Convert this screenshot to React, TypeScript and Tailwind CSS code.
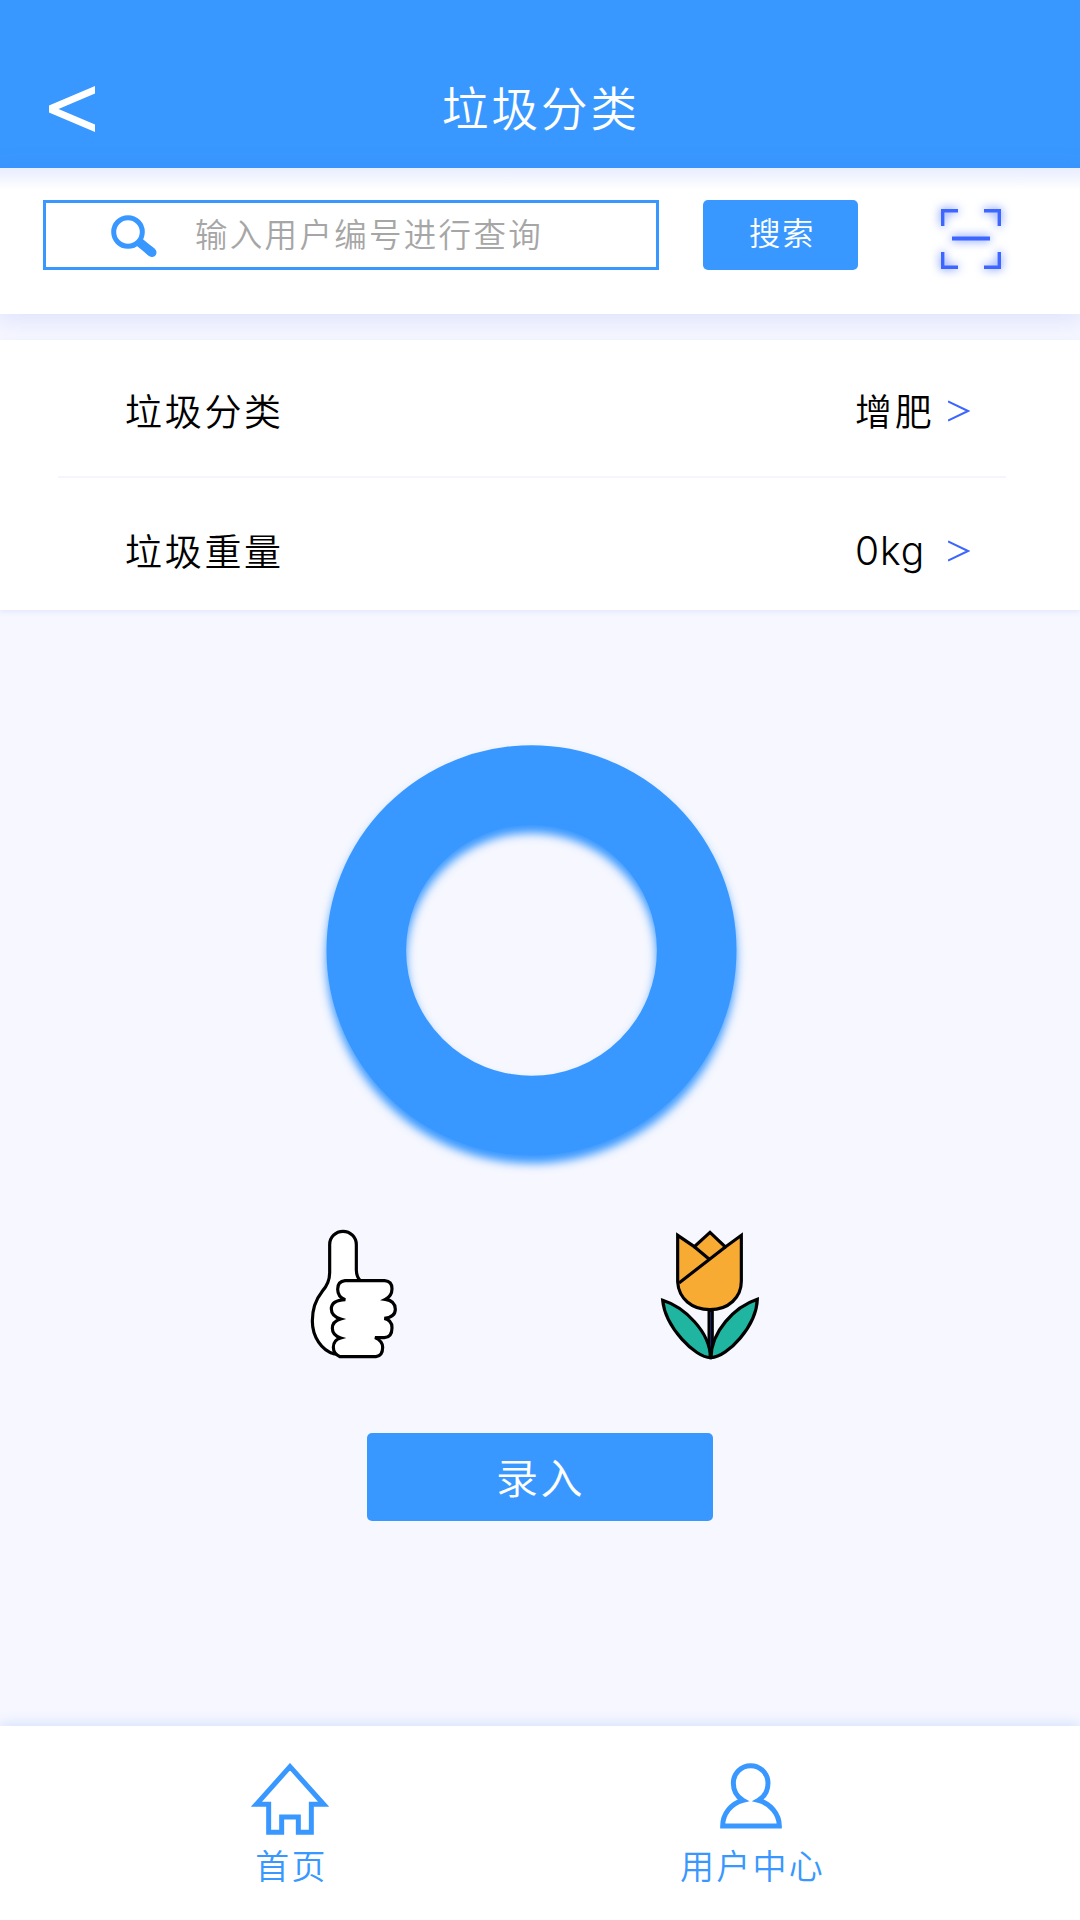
import type { ReactNode } from "react";

const FONT = 'font-["Noto_Sans_CJK_SC","Liberation_Sans",sans-serif]';

function BackIcon() {
  return (
    <svg width="46" height="48" viewBox="0 0 46 48" fill="none">
      <path d="M46 0V7.500L9.500 23L46 38.500V46L0 26.500V19.500Z" fill="#fff" />
    </svg>
  );
}

function SearchIcon() {
  return (
    <svg width="46" height="44" viewBox="0 0 46 44" fill="none" stroke="#3998ff">
      <circle cx="17" cy="17" r="14.300" strokeWidth="5" />
      <path d="M27 26L41 37.500" strokeWidth="9" />
      <path d="M38 35L41 37.500" strokeWidth="9" strokeLinecap="round" />
    </svg>
  );
}

function ScanIcon() {
  return (
    <svg
      width="60"
      height="60"
      viewBox="0 0 60 60"
      fill="none"
      stroke="#3d66ff"
      strokeWidth="3.4"
      className="overflow-visible drop-shadow-[0_0_5px_rgba(61,102,255,0.95)]"
    >
      <path d="M1.700 17V1.700H17M43 1.700H58.300V17M1.700 43V58.300H17M43 58.300H58.300V43" />
      <path d="M11 29.500H49" strokeWidth="4" />
    </svg>
  );
}

function Ring() {
  return (
    <svg width="411" height="410" viewBox="0 0 411 410" fill="none" className="overflow-visible drop-shadow-[0_8px_5px_#3998ff]">
      <circle cx="205.500" cy="205.300" r="165.200" stroke="#3998ff" strokeWidth="79.600" />
    </svg>
  );
}

function ThumbIcon() {
  return (
    <svg width="130" height="170" viewBox="0 0 390 510" fill="#fff" stroke="#000" strokeWidth="9.500" strokeLinejoin="round">
      <path d="M133 432C95 422 67 380 67 333C67 298 79 266 96 245C111 228 119 207 119 188V104A40 40 0 0 1 199 104V178C199 192 203 205 212 213L190 430Z" />
      <path
        d="M165 212H284Q306 214 306 236Q306 258 286 268Q316 272 316 298Q316 322 283 325Q306 330 306 353Q306 382 283 383H255Q278 393 278 412Q278 438 258 440H150Q130 432 130 412Q130 390 152 384Q127 376 127 355Q127 334 152 327Q124 318 124 297Q124 271 166 269Q143 262 143 238Q143 214 165 212Z"
        strokeLinejoin="miter"
      />
    </svg>
  );
}

function TulipIcon() {
  return (
    <svg width="140" height="170" viewBox="0 0 420 510" stroke="#000" strokeWidth="9.500" fill="none">
      <path d="M212 298V444" strokeWidth="19" />
      <path d="M212 306V415" stroke="#20308a" strokeWidth="2.500" />
      <path d="M68 271C132 291 211 365 211 443C166 443 76 352 68 271Z" fill="#20b5a0" />
      <path d="M352 268C283 291 213 365 213 443C264 440 349 348 352 268Z" fill="#20b5a0" />
      <path d="M113 76V216C116 265 155 299 210 299C266 299 304 262 304 214V76L256 111L210 67L163 110Z" fill="#f7ab33" />
      <path d="M163 110L208 148M256 111L117 219" />
    </svg>
  );
}

function HomeIcon() {
  return (
    <svg width="78" height="72" viewBox="0 0 234 216" fill="none" stroke="#3998ff" strokeWidth="15">
      <path d="M117 11L16 124H53V208H92V162H142V208H181V124H218Z" />
    </svg>
  );
}

function UserIcon() {
  return (
    <svg width="62" height="66" viewBox="0 0 186 198" fill="none" stroke="#3998ff" strokeWidth="15">
      <path
        d="M69 112C50 101 40 82 40 60A52 52 0 0 1 144 60C144 82 134 101 115 112C151 121 178 153 178 189H8C8 153 33 121 69 112Z"
        strokeMiterlimit="8"
      />
    </svg>
  );
}

function Chevron() {
  return (
    <svg width="22" height="22" viewBox="0 0 22 22" fill="none" stroke="#3d66ff" strokeWidth="2">
      <path d="M0 1.500L20 11L0 20.500" />
    </svg>
  );
}

function Row({ label, children }: { label: string; children: ReactNode }) {
  return (
    <div className="flex h-[57px] items-center pr-[110px] pl-[125px] text-[37px] leading-[54px] tracking-[2.700px] text-black">
      <span className="flex-1 pb-[2px]">{label}</span>
      <span className="w-[93px] pb-[2px]">{children}</span>
      <Chevron />
    </div>
  );
}

function Tab({ icon, label, className }: { icon: ReactNode; label: string; className: string }) {
  return (
    <button className={`flex flex-col items-center ${className}`}>
      <span className="flex h-[76px] items-start">{icon}</span>
      <span className="-mr-[3px] text-[34px] leading-[52px] tracking-[2.300px]">{label}</span>
    </button>
  );
}

export default function App() {
  return (
    <div className={`flex h-[1920px] w-[1080px] flex-col overflow-hidden bg-[#f6f7ff] font-[350] ${FONT}`}>
      <header className="grid h-[168px] shrink-0 grid-cols-[1fr_auto_1fr] bg-[#3998ff] pt-[70px] text-white">
        <button className="flex items-start pt-[16px] pl-[49px]">
          <BackIcon />
        </button>
        <h1 className="-mr-[2px] text-[46.500px] leading-[72px] tracking-[3px]">垃圾分类</h1>
      </header>

      <section className="relative flex h-[146px] shrink-0 items-start bg-white bg-[linear-gradient(#e9edfe,#fff_22px)] pt-8 pl-[43px] shadow-[0_4px_22px_4px_rgba(70,95,230,0.120)]">
        <div className="flex h-[70px] w-[616px] border-[3px] border-[#3998ff] bg-white">
          <span className="w-[149px] pt-[12px] pl-[65px]">
            <SearchIcon />
          </span>
          <span className="text-[32.500px] leading-[60px] tracking-[2.300px] whitespace-nowrap text-[#a6a6a6]">
            输入用户编号进行查询
          </span>
        </div>
        <button className="ml-[44px] h-[70px] w-[155px] rounded-[5px] bg-[#3998ff] pb-1.5 pl-[3px] text-[31.500px] tracking-[1.500px] text-white">
          搜索
        </button>
        <button className="ml-[83px] pt-[9px]">
          <ScanIcon />
        </button>
      </section>

      <section className="relative mt-[26px] flex h-[270px] shrink-0 flex-col bg-white pt-[42px] shadow-[0_2px_5px_rgba(90,120,240,0.120)]">
        <Row label="垃圾分类">增肥</Row>
        <div className="mt-[37px] mr-[74px] mb-[44px] ml-[58px] h-[2px] shrink-0 bg-[#f4f5fe]" />
        <Row label="垃圾重量">
          <span className="block pt-[3px] font-[Inter] text-[39px] leading-[54px] font-light tracking-[1px]">0kg</span>
        </Row>
      </section>

      <main className="flex flex-1 flex-col">
        <div className="flex pt-[135px] pl-[326px]">
          <Ring />
        </div>
        <div className="mt-[55px] flex gap-[220px] pl-[290px]">
          <ThumbIcon />
          <TulipIcon />
        </div>
        <button className="mt-[53px] ml-[367px] h-[88px] w-[346px] rounded-[5px] bg-[#3998ff] pb-[3px] pl-[1px] text-[42px] tracking-[2.500px] text-white">
          录入
        </button>
      </main>

      <footer className="flex h-[194px] shrink-0 bg-white pt-[37px] text-[#3998ff] shadow-[0_-2px_12px_rgba(57,130,255,0.180)]">
        <Tab icon={<HomeIcon />} label="首页" className="ml-[251px] w-[78px]" />
        <Tab icon={<UserIcon />} label="用户中心" className="ml-[341px] w-[162px]" />
      </footer>
    </div>
  );
}
